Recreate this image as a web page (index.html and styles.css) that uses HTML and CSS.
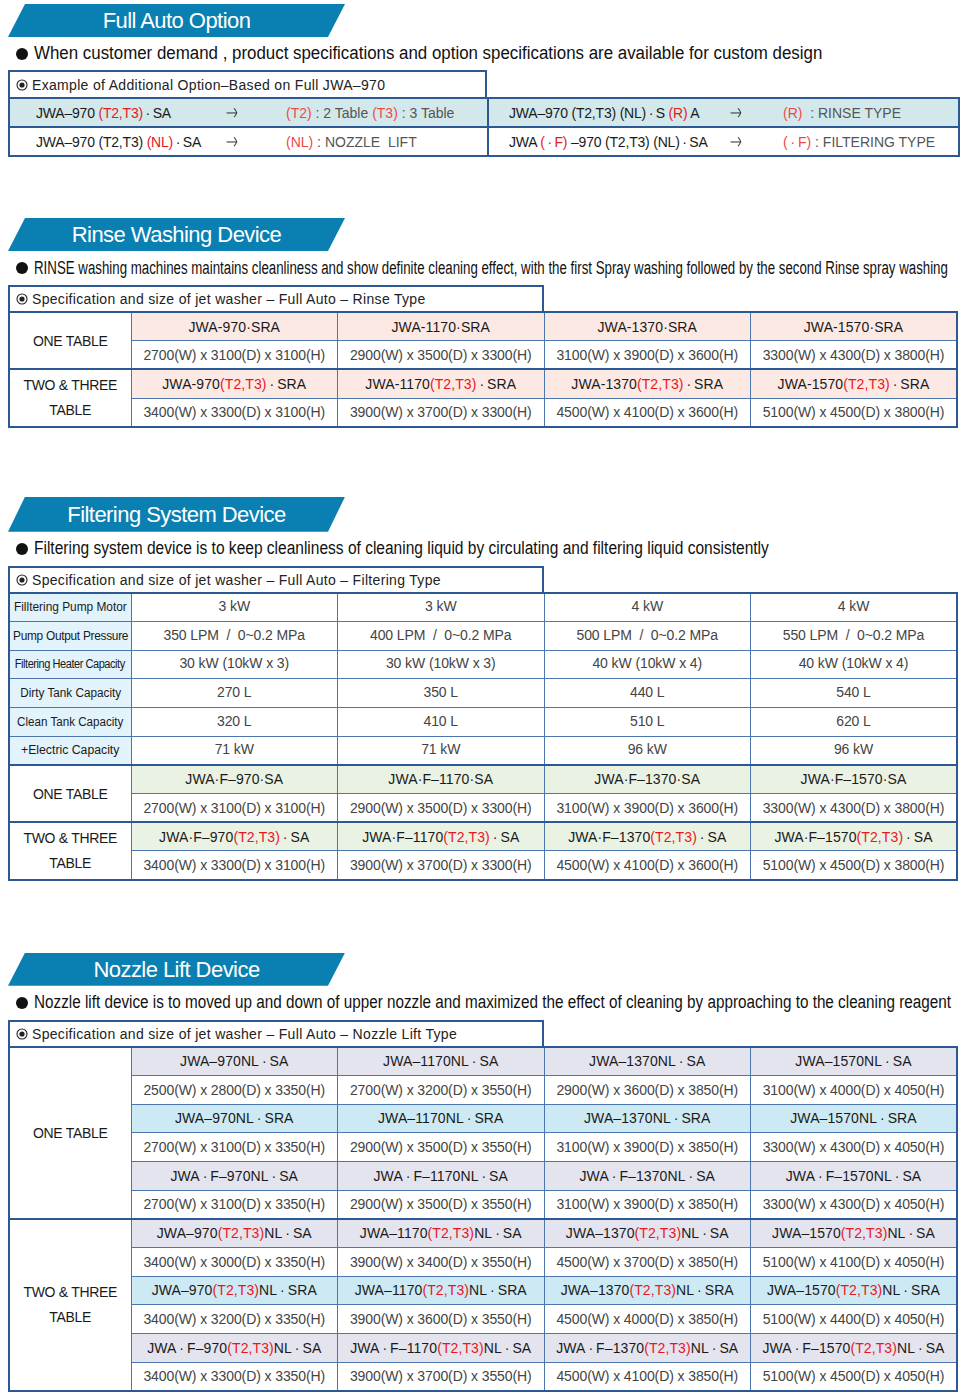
FILE: index.html
```html
<!DOCTYPE html>
<html>
<head>
<meta charset="utf-8">
<link rel="stylesheet" href="styles.css">
</head>
<body>
<div class="page">

<section class="sec sec-1">
  <div class="banner"><span>Full Auto Option</span></div>
  <p class="lead"><span class="dot"></span><span class="lead-text l1">When customer demand , product specifications and option specifications are available for custom design</span></p>
  <div class="caption cap-narrow"><svg class="ico" viewBox="0 0 12 12"><circle cx="6" cy="6" r="5" fill="none" stroke="#222" stroke-width="1.1"/><circle cx="6" cy="6" r="2.6" fill="#222"/></svg>Example of Additional Option–Based on Full JWA–970</div>
  <table class="opt">
    <colgroup><col class="o1"><col class="o2"><col class="o3"><col class="o4"><col class="o5"><col class="o6"></colgroup>
    <tr class="tint">
      <td class="m pl27">JWA–970 <span class="r">(T2,T3)</span>&#8201;·&#8201;SA</td>
      <td class="arr"><svg viewBox="0 0 16 14"><path d="M0.5 7.5 H12" stroke="#333" stroke-width="1.1" fill="none"/><path d="M8.5 2.5 Q14 7 8.5 12" stroke="#333" stroke-width="1.1" fill="none"/></svg></td>
      <td class="d sep"><span class="rl">(T2)</span> : 2 Table <span class="rl">(T3)</span> : 3 Table</td>
      <td class="m pl21">JWA–970 (T2,T3) (NL)&#8201;·&#8201;S <span class="r">(R)</span> A</td>
      <td class="arr"><svg viewBox="0 0 16 14"><path d="M0.5 7.5 H12" stroke="#333" stroke-width="1.1" fill="none"/><path d="M8.5 2.5 Q14 7 8.5 12" stroke="#333" stroke-width="1.1" fill="none"/></svg></td>
      <td class="d"><span class="rl">(R)</span> &nbsp;: RINSE TYPE</td>
    </tr>
    <tr>
      <td class="m pl27">JWA–970 (T2,T3) <span class="r">(NL)</span>&#8201;·&#8201;SA</td>
      <td class="arr"><svg viewBox="0 0 16 14"><path d="M0.5 7.5 H12" stroke="#333" stroke-width="1.1" fill="none"/><path d="M8.5 2.5 Q14 7 8.5 12" stroke="#333" stroke-width="1.1" fill="none"/></svg></td>
      <td class="d sep"><span class="rl">(NL)</span> : NOZZLE&nbsp; LIFT</td>
      <td class="m pl21">JWA <span class="r">(&#8201;·&#8201;F)</span> –970 (T2,T3) (NL)&#8201;·&#8201;SA</td>
      <td class="arr"><svg viewBox="0 0 16 14"><path d="M0.5 7.5 H12" stroke="#333" stroke-width="1.1" fill="none"/><path d="M8.5 2.5 Q14 7 8.5 12" stroke="#333" stroke-width="1.1" fill="none"/></svg></td>
      <td class="d"><span class="rl">(&#8201;·&#8201;F)</span> : FILTERING TYPE</td>
    </tr>
  </table>
</section>

<section class="sec sec-2">
  <div class="banner"><span>Rinse Washing Device</span></div>
  <p class="lead"><span class="dot"></span><span class="lead-text l2">RINSE washing machines maintains cleanliness and show definite cleaning effect, with the first Spray washing followed by the second Rinse spray washing</span></p>
  <div class="caption"><svg class="ico" viewBox="0 0 12 12"><circle cx="6" cy="6" r="5" fill="none" stroke="#222" stroke-width="1.1"/><circle cx="6" cy="6" r="2.6" fill="#222"/></svg>Specification and size of jet washer – Full Auto – Rinse Type</div>
  <table class="spec">
    <colgroup><col class="c0"><col><col><col><col></colgroup>
    <tr class="pink">
      <td class="lbl" rowspan="2">ONE TABLE</td>
      <td>JWA-970·SRA</td><td>JWA-1170·SRA</td><td>JWA-1370·SRA</td><td>JWA-1570·SRA</td>
    </tr>
    <tr class="dim">
      <td>2700(W) x 3100(D) x 3100(H)</td><td>2900(W) x 3500(D) x 3300(H)</td><td>3100(W) x 3900(D) x 3600(H)</td><td>3300(W) x 4300(D) x 3800(H)</td>
    </tr>
    <tr class="pink grp">
      <td class="lbl two" rowspan="2">TWO &amp; THREE<br>TABLE</td>
      <td>JWA-970<span class="r">(T2,T3)</span>&#8201;·&#8201;SRA</td><td>JWA-1170<span class="r">(T2,T3)</span>&#8201;·&#8201;SRA</td><td>JWA-1370<span class="r">(T2,T3)</span>&#8201;·&#8201;SRA</td><td>JWA-1570<span class="r">(T2,T3)</span>&#8201;·&#8201;SRA</td>
    </tr>
    <tr class="dim">
      <td>3400(W) x 3300(D) x 3100(H)</td><td>3900(W) x 3700(D) x 3300(H)</td><td>4500(W) x 4100(D) x 3600(H)</td><td>5100(W) x 4500(D) x 3800(H)</td>
    </tr>
  </table>
</section>

<section class="sec sec-3">
  <div class="banner"><span>Filtering System Device</span></div>
  <p class="lead"><span class="dot"></span><span class="lead-text l3">Filtering system device is to keep cleanliness of cleaning liquid by circulating and filtering liquid consistently</span></p>
  <div class="caption"><svg class="ico" viewBox="0 0 12 12"><circle cx="6" cy="6" r="5" fill="none" stroke="#222" stroke-width="1.1"/><circle cx="6" cy="6" r="2.6" fill="#222"/></svg>Specification and size of jet washer – Full Auto – Filtering Type</div>
  <table class="spec">
    <colgroup><col class="c0"><col><col><col><col></colgroup>
    <tr class="dim val">
      <td class="key"><span class="kx k1">Filltering Pump Motor</span></td><td>3 kW</td><td>3 kW</td><td>4 kW</td><td>4 kW</td>
    </tr>
    <tr class="dim val">
      <td class="key"><span class="kx k2">Pump Output Pressure</span></td><td>350 LPM &nbsp;/&nbsp; 0~0.2 MPa</td><td>400 LPM &nbsp;/&nbsp; 0~0.2 MPa</td><td>500 LPM &nbsp;/&nbsp; 0~0.2 MPa</td><td>550 LPM &nbsp;/&nbsp; 0~0.2 MPa</td>
    </tr>
    <tr class="dim val">
      <td class="key"><span class="kx k3">Filtering Heater Capacity</span></td><td>30 kW (10kW x 3)</td><td>30 kW (10kW x 3)</td><td>40 kW (10kW x 4)</td><td>40 kW (10kW x 4)</td>
    </tr>
    <tr class="dim val">
      <td class="key"><span class="kx k4">Dirty Tank Capacity</span></td><td>270 L</td><td>350 L</td><td>440 L</td><td>540 L</td>
    </tr>
    <tr class="dim val">
      <td class="key"><span class="kx k5">Clean Tank Capacity</span></td><td>320 L</td><td>410 L</td><td>510 L</td><td>620 L</td>
    </tr>
    <tr class="dim val">
      <td class="key"><span class="kx k6">+Electric Capacity</span></td><td>71 kW</td><td>71 kW</td><td>96 kW</td><td>96 kW</td>
    </tr>
    <tr class="green grp">
      <td class="lbl" rowspan="2">ONE TABLE</td>
      <td>JWA·F–970·SA</td><td>JWA·F–1170·SA</td><td>JWA·F–1370·SA</td><td>JWA·F–1570·SA</td>
    </tr>
    <tr class="dim">
      <td>2700(W) x 3100(D) x 3100(H)</td><td>2900(W) x 3500(D) x 3300(H)</td><td>3100(W) x 3900(D) x 3600(H)</td><td>3300(W) x 4300(D) x 3800(H)</td>
    </tr>
    <tr class="green grp">
      <td class="lbl two" rowspan="2">TWO &amp; THREE<br>TABLE</td>
      <td>JWA·F–970<span class="r">(T2,T3)</span>&#8201;·&#8201;SA</td><td>JWA·F–1170<span class="r">(T2,T3)</span>&#8201;·&#8201;SA</td><td>JWA·F–1370<span class="r">(T2,T3)</span>&#8201;·&#8201;SA</td><td>JWA·F–1570<span class="r">(T2,T3)</span>&#8201;·&#8201;SA</td>
    </tr>
    <tr class="dim">
      <td>3400(W) x 3300(D) x 3100(H)</td><td>3900(W) x 3700(D) x 3300(H)</td><td>4500(W) x 4100(D) x 3600(H)</td><td>5100(W) x 4500(D) x 3800(H)</td>
    </tr>
  </table>
</section>

<section class="sec sec-4">
  <div class="banner"><span>Nozzle Lift Device</span></div>
  <p class="lead"><span class="dot"></span><span class="lead-text l4">Nozzle lift device is to moved up and down of upper nozzle and maximized the effect of cleaning by approaching to the cleaning reagent</span></p>
  <div class="caption"><svg class="ico" viewBox="0 0 12 12"><circle cx="6" cy="6" r="5" fill="none" stroke="#222" stroke-width="1.1"/><circle cx="6" cy="6" r="2.6" fill="#222"/></svg>Specification and size of jet washer – Full Auto – Nozzle Lift Type</div>
  <table class="spec">
    <colgroup><col class="c0"><col><col><col><col></colgroup>
    <tr class="lav">
      <td class="lbl" rowspan="6">ONE TABLE</td>
      <td>JWA–970NL&#8201;·&#8201;SA</td><td>JWA–1170NL&#8201;·&#8201;SA</td><td>JWA–1370NL&#8201;·&#8201;SA</td><td>JWA–1570NL&#8201;·&#8201;SA</td>
    </tr>
    <tr class="dim">
      <td>2500(W) x 2800(D) x 3350(H)</td><td>2700(W) x 3200(D) x 3550(H)</td><td>2900(W) x 3600(D) x 3850(H)</td><td>3100(W) x 4000(D) x 4050(H)</td>
    </tr>
    <tr class="cyan">
      <td>JWA–970NL&#8201;·&#8201;SRA</td><td>JWA–1170NL&#8201;·&#8201;SRA</td><td>JWA–1370NL&#8201;·&#8201;SRA</td><td>JWA–1570NL&#8201;·&#8201;SRA</td>
    </tr>
    <tr class="dim">
      <td>2700(W) x 3100(D) x 3350(H)</td><td>2900(W) x 3500(D) x 3550(H)</td><td>3100(W) x 3900(D) x 3850(H)</td><td>3300(W) x 4300(D) x 4050(H)</td>
    </tr>
    <tr class="lav">
      <td>JWA&#8201;·&#8201;F–970NL&#8201;·&#8201;SA</td><td>JWA&#8201;·&#8201;F–1170NL&#8201;·&#8201;SA</td><td>JWA&#8201;·&#8201;F–1370NL&#8201;·&#8201;SA</td><td>JWA&#8201;·&#8201;F–1570NL&#8201;·&#8201;SA</td>
    </tr>
    <tr class="dim">
      <td>2700(W) x 3100(D) x 3350(H)</td><td>2900(W) x 3500(D) x 3550(H)</td><td>3100(W) x 3900(D) x 3850(H)</td><td>3300(W) x 4300(D) x 4050(H)</td>
    </tr>
    <tr class="lav grp">
      <td class="lbl two" rowspan="6">TWO &amp; THREE<br>TABLE</td>
      <td>JWA–970<span class="r">(T2,T3)</span>NL&#8201;·&#8201;SA</td><td>JWA–1170<span class="r">(T2,T3)</span>NL&#8201;·&#8201;SA</td><td>JWA–1370<span class="r">(T2,T3)</span>NL&#8201;·&#8201;SA</td><td>JWA–1570<span class="r">(T2,T3)</span>NL&#8201;·&#8201;SA</td>
    </tr>
    <tr class="dim">
      <td>3400(W) x 3000(D) x 3350(H)</td><td>3900(W) x 3400(D) x 3550(H)</td><td>4500(W) x 3700(D) x 3850(H)</td><td>5100(W) x 4100(D) x 4050(H)</td>
    </tr>
    <tr class="cyan">
      <td>JWA–970<span class="r">(T2,T3)</span>NL&#8201;·&#8201;SRA</td><td>JWA–1170<span class="r">(T2,T3)</span>NL&#8201;·&#8201;SRA</td><td>JWA–1370<span class="r">(T2,T3)</span>NL&#8201;·&#8201;SRA</td><td>JWA–1570<span class="r">(T2,T3)</span>NL&#8201;·&#8201;SRA</td>
    </tr>
    <tr class="dim">
      <td>3400(W) x 3200(D) x 3350(H)</td><td>3900(W) x 3600(D) x 3550(H)</td><td>4500(W) x 4000(D) x 3850(H)</td><td>5100(W) x 4400(D) x 4050(H)</td>
    </tr>
    <tr class="lav">
      <td>JWA&#8201;·&#8201;F–970<span class="r">(T2,T3)</span>NL&#8201;·&#8201;SA</td><td>JWA&#8201;·&#8201;F–1170<span class="r">(T2,T3)</span>NL&#8201;·&#8201;SA</td><td>JWA&#8201;·&#8201;F–1370<span class="r">(T2,T3)</span>NL&#8201;·&#8201;SA</td><td>JWA&#8201;·&#8201;F–1570<span class="r">(T2,T3)</span>NL&#8201;·&#8201;SA</td>
    </tr>
    <tr class="dim">
      <td>3400(W) x 3300(D) x 3350(H)</td><td>3900(W) x 3700(D) x 3550(H)</td><td>4500(W) x 4100(D) x 3850(H)</td><td>5100(W) x 4500(D) x 4050(H)</td>
    </tr>
  </table>
</section>

</div>
</body>
</html>
```
FILE: styles.css
```css
* { box-sizing: border-box; }
html, body { margin: 0; padding: 0; background: #fff; }
body {
  font-family: "Liberation Sans", Arial, sans-serif;
  color: #1a1a1a;
  width: 964px;
  overflow: hidden;
}
.page { padding: 0 6px 0 8px; }

.sec-1 { padding-top: 4px; }
.sec-2 { margin-top: 61px; }
.sec-3 { margin-top: 69px; }
.sec-4 { margin-top: 72px; }

.banner {
  width: 337px;
  height: 33px;
  background: #0a7fb1;
  clip-path: polygon(17px 0, 100% 0, calc(100% - 17px) 100%, 0 100%);
  display: flex;
  align-items: center;
  justify-content: center;
  color: #fff;
  font-size: 22px;
  letter-spacing: -0.55px;
}
.sec-3 .banner { height: 35px; }
.banner span { display: block; margin-top: 1px; }

.lead {
  margin: 0;
  height: 34px;
  display: flex;
  align-items: center;
  padding-left: 8px;
  white-space: nowrap;
  overflow: hidden;
}
.sec-1 .lead { height: 33px; }
.dot {
  width: 12px;
  height: 12px;
  border-radius: 50%;
  background: #111;
  flex: none;
  margin-right: 6px;
}
.lead-text {
  display: inline-block;
  font-size: 18px;
  color: #111;
  transform-origin: left center;
  flex: none;
}
.l1 { transform: scaleX(0.938); }
.l2 { transform: scaleX(0.738); }
.l3 { transform: scaleX(0.862); }
.l4 { transform: scaleX(0.848); }

.caption {
  width: 536px;
  height: 26px;
  border: 2px solid #2c5894;
  border-bottom: none;
  display: flex;
  align-items: center;
  padding-left: 6px;
  font-size: 14px;
  color: #222;
  letter-spacing: 0.32px;
}
.cap-narrow { width: 479px; height: 27px; }
.ico { width: 12px; height: 12px; margin-right: 4px; flex: none; }

table {
  border-collapse: collapse;
  table-layout: fixed;
  width: 950px;
  border: 2px solid #2c5894;
}
td {
  padding: 0;
  font-size: 14px;
  white-space: nowrap;
}

/* option table */
.opt td { height: 29px; border-top: 2px solid #2c5894; color: #1a1a1a; }
.o1 { width: 210px; } .o2 { width: 59px; } .o3 { width: 210px; }
.o4 { width: 235px; } .o5 { width: 52px; } .o6 { width: 184px; }
.opt .tint td { background: #d3e8eb; }
.opt .sep { border-right: 2px solid #2c5894; }
.pl27 { padding-left: 26px; }
.pl21 { padding-left: 20px; }
.opt .m { letter-spacing: -0.2px; }
.opt .d { color: #555; padding-left: 8px; letter-spacing: 0; }
.arr { padding-left: 7px; }
.arr svg { width: 15px; height: 13px; display: block; }
.r { color: #e8161e; }
.rl { color: #f04848; }

/* spec tables */
.c0 { width: 122px; }
.spec td {
  height: 28.7px;
  border: 1px solid #4b76ae;
  text-align: center;
  color: #1a1a1a;
  letter-spacing: 0.1px;
}
.spec tr.dim td { color: #444; letter-spacing: -0.1px; }
.spec tr.val td { padding-bottom: 2px; }
.spec tr.grp td { border-top: 2px solid #2c5894; }
.spec td.lbl {
  background: #fff;
  color: #1a1a1a;
  letter-spacing: -0.3px;
  border-right: 1px solid #4b76ae;
}
.spec td.two { line-height: 25px; }
.pink td { background: #fde9e4; }
.green td { background: #eaf2e3; }
.lav td { background: #e4e4ef; }
.cyan td { background: #cdeaf4; }
.spec td.key {
  background: #e2f3fc;
  padding-bottom: 0;
}
.kx {
  display: inline-block;
  font-size: 12.5px;
  color: #1a1a1a;
  letter-spacing: 0;
  transform-origin: center center;
}
.k1 { transform: scaleX(0.95); }
.k2 { letter-spacing: -0.3px; transform: scaleX(0.95); }
.k3 { font-size: 12px; letter-spacing: -0.5px; transform: scaleX(0.92); }
.k4 { transform: scaleX(0.94); }
.k5 { transform: scaleX(0.93); }
.k6 { transform: scaleX(0.98); }
```
